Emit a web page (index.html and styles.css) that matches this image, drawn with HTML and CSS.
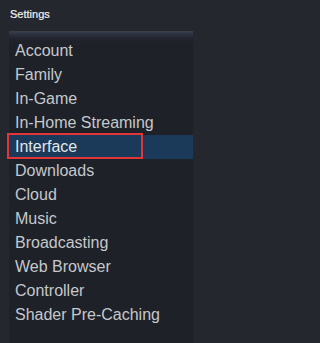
FILE: index.html
```html
<!DOCTYPE html>
<html>
<head>
<meta charset="utf-8">
<link rel="stylesheet" href="styles.css">
</head>
<body>
<div class="header">Settings</div>
<div class="panel">
  <ul class="menu">
    <li class="item">Account</li>
    <li class="item">Family</li>
    <li class="item">In-Game</li>
    <li class="item">In-Home Streaming</li>
    <li class="item active">Interface<span class="mark"></span></li>
    <li class="item">Downloads</li>
    <li class="item">Cloud</li>
    <li class="item">Music</li>
    <li class="item">Broadcasting</li>
    <li class="item">Web Browser</li>
    <li class="item">Controller</li>
    <li class="item">Shader Pre-Caching</li>
  </ul>
</div>
</body>
</html>
```
FILE: styles.css
```css
html, body {
  margin: 0;
  padding: 0;
  height: 100%;
}
body {
  background: #24272d;
  font-family: "Liberation Sans", Arial, sans-serif;
  overflow: hidden;
}
.header {
  height: 31px;
  padding-left: 10px;
  font-size: 11px;
  line-height: 28px;
  color: #eef0f2;
  -webkit-text-stroke: 0.2px #eef0f2;
}
.panel {
  margin-left: 9px;
  width: 184px;
  height: 312px;
  background: linear-gradient(#3d414d 0, #2d3240 3px, #20232c 8px, #1e2128 14px);
}
.menu {
  list-style: none;
  margin: 0;
  padding: 8px 0 0 0;
}
.item {
  position: relative;
  height: 24px;
  line-height: 24px;
  padding-left: 6px;
  font-size: 16px;
  color: #c5c8cc;
}
.item.active {
  background: #1b3958;
  color: #e2e6ea;
}
.mark {
  position: absolute;
  left: -2px;
  top: -2px;
  width: 132px;
  height: 22px;
  border: 2px solid #e2353a;
}
```
